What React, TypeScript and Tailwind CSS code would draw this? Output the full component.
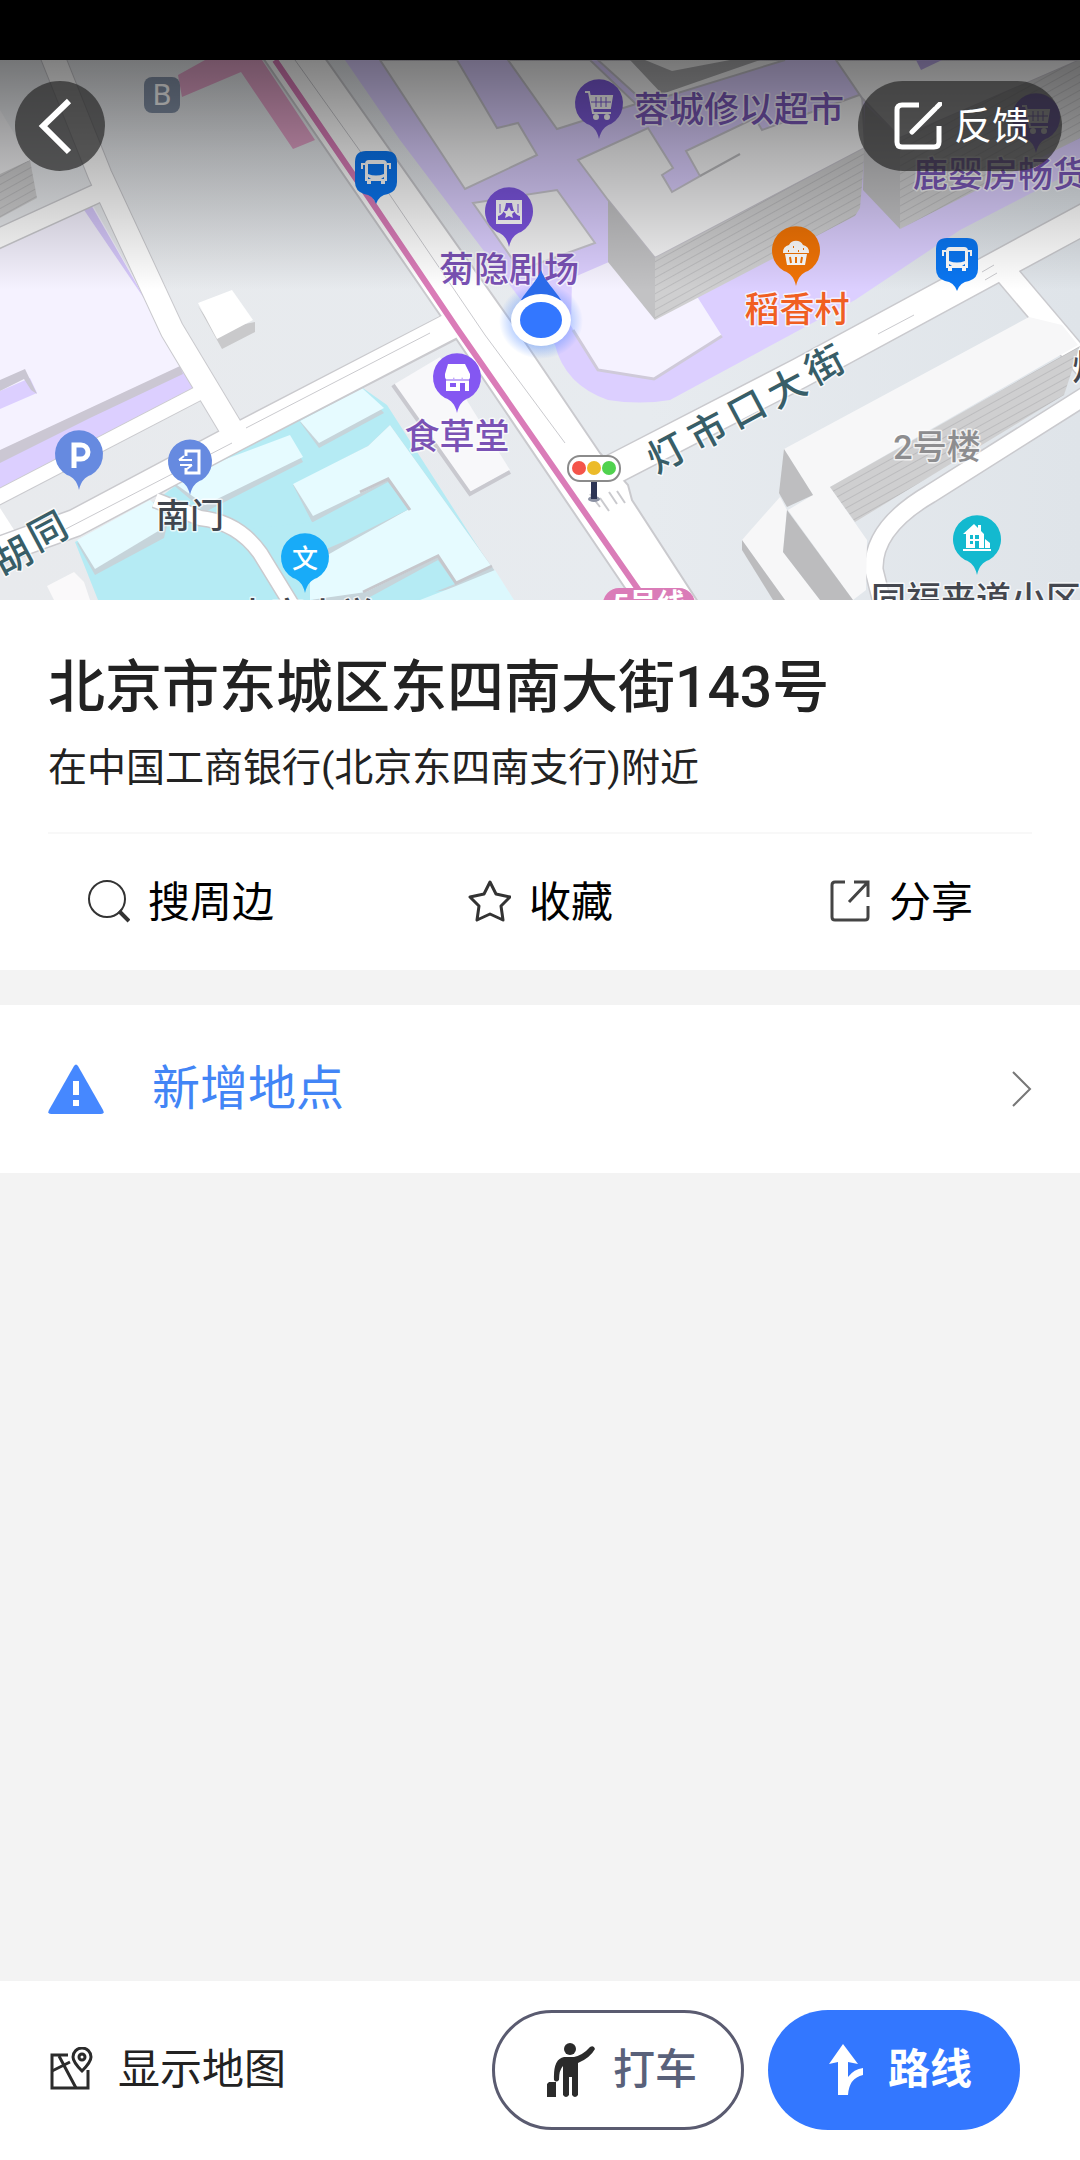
import type { ReactNode } from "react";

type Point = { x: number; y: number };

function Pin({ x, y, color, r = 24, children }: Point & { color: string; r?: number; children?: ReactNode }) {
  return (
    <g transform={`translate(${x} ${y})`}>
      <path
        d={`M0 ${r + 11} C-2 ${r + 2} -6 ${r - 2} -12 ${r - 4} A${r} ${r} 0 1 1 12 ${r - 4} C6 ${r - 2} 2 ${r + 2} 0 ${r + 11}Z`}
        fill={color}
      />
      {children}
    </g>
  );
}

function BusPin({ x, y }: Point) {
  return (
    <g transform={`translate(${x} ${y})`}>
      <path d="M-10 -22H10Q21 -22 21 -11V9Q21 18 12 21Q3 22 0 31Q-3 22 -12 21Q-21 18 -21 9V-11Q-21 -22 -10 -22Z" fill="#0a76f2" />
      <path
        fillRule="evenodd"
        fill="#fff"
        d="M-7 -13H7Q11 -13 11 -9V8H9V11H5V8H-5V11H-9V8H-11V-9Q-11 -13 -7 -13ZM-8 -9V1Q0 4 8 1V-9ZM-8 4V6H-5ZM8 4V6H5Z"
      />
      <path d="M-11 -9H-14V-4M11 -9H14V-4" stroke="#fff" strokeWidth="2" fill="none" />
    </g>
  );
}

function Cart() {
  return (
    <g fill="none" stroke="#fff" strokeWidth="2">
      <path d="M-14 -12H-10L-6 9H12" />
      <path d="M-9 -8H13L11 4H-7" fill="#fff" />
      <path d="M-3 -7V3M2 -7V3M7 -7V3M-8 -2H12" stroke="#7c5ad8" strokeWidth="1" />
      <circle cx="-3" cy="13" r="2" fill="#fff" />
      <circle cx="8" cy="13" r="2" fill="#fff" />
    </g>
  );
}

function Label({ x, y, color, size = 35, anchor = "middle", children }: Point & {
  color: string;
  size?: number;
  anchor?: "start" | "middle";
  children: string;
}) {
  return (
    <text x={x} y={y} fill={color} fontSize={size} fontWeight="500" textAnchor={anchor} stroke="#fff" strokeOpacity="0.7" strokeWidth="3" strokeLinejoin="round" paintOrder="stroke">
      {children}
    </text>
  );
}

const streetNames = [
  { char: "灯", x: 673, y: 465 },
  { char: "市", x: 714, y: 443 },
  { char: "口", x: 753, y: 421 },
  { char: "大", x: 793, y: 400 },
  { char: "街", x: 831, y: 377 },
  { char: "胡", x: 19, y: 568 },
  { char: "同", x: 54, y: 543 },
];

function MapView() {
  return (
    <svg viewBox="0 60 1080 540" preserveAspectRatio="xMidYMid slice" className="block h-[540px] w-full" role="img" aria-label="地图">
      <defs>
        <linearGradient id="shade" x1="0" y1="0" x2="0" y2="1">
          <stop offset="0" stopColor="#000" stopOpacity="0.5" />
          <stop offset="0.4" stopColor="#000" stopOpacity="0.28" />
          <stop offset="1" stopColor="#000" stopOpacity="0" />
        </linearGradient>
        <linearGradient id="ground" x1="0" y1="0" x2="1" y2="0">
          <stop offset="0" stopColor="#e8eaed" />
          <stop offset="0.6" stopColor="#e7ebef" />
          <stop offset="1" stopColor="#dfe4e9" />
        </linearGradient>
        <pattern id="floors" width="8" height="7" patternUnits="userSpaceOnUse" patternTransform="rotate(-29)">
          <path d="M0 0H8V7H0Z" fill="#cfcfd0" />
          <path d="M0 0H8" stroke="#bcbcbe" strokeWidth="2" />
        </pattern>
        <radialGradient id="glow">
          <stop offset="0.6" stopColor="#3377ff" stopOpacity="0.4" />
          <stop offset="1" stopColor="#3377ff" stopOpacity="0" />
        </radialGradient>
      </defs>

      <path d="M0 60H1080V600H0Z" fill="url(#ground)" />

      {/* West block */}
      <path d="M0 243L90 200L163 330L200 384L0 486Z" fill="#f5f2ff" />
      <path d="M82 207L90 203L163 330L198 372L160 322L135 285Z" fill="#d6c8fb" />
      <path d="M0 460L182 368L200 384L0 488Z" fill="#dccfff" />
      <path d="M0 450L180 366L183 374L90 418L0 463Z" fill="#cbc7d3" />
      <path d="M0 391L30 378L37 393L0 409Z" fill="#dccfff" />
      <path d="M0 380L25 369L37 394L31 390L24 379L0 391Z" fill="#c9c6d2" />
      <path d="M0 170L30 160L37 198L0 218Z" fill="url(#floors)" />
      <path d="M0 110L30 160L0 174Z" fill="#f2f2f4" />

      {/* School grounds */}
      <path d="M75 542L150 505L212 458L360 386L387 405L512 600H98Z" fill="#b5ebf4" />
      <g fill="#c6d4da">
        <path d="M77 543L150 503L168 522L164 538L95 575Z" />
        <path d="M170 482L290 436L303 462L205 512Z" />
        <path d="M300 422L362 388L384 413L319 448Z" />
        <path d="M293 485L368 446L390 425L495 571L456 589L370 600H313V524Z" />
      </g>
      <g fill="#e6fbff">
        <path d="M77 540L150 500L168 517L160 530L95 569Z" />
        <path d="M170 480L290 435L303 457L205 505Z" />
        <path d="M300 421L362 388L384 408L319 443Z" />
        <path d="M293 484L368 446L390 425L492 567L456 583L438 557L366 592L310 600V565L345 545L409 509L388 480L313 516Z" />
      </g>
      <path d="M313 522L388 482L409 509L345 541L310 556L275 560L240 530Z" fill="#b5ebf4" />
      <path d="M370 597L438 560L455 584L415 600H370Z" fill="#b5ebf4" />
      <path d="M456 586L495 570L514 600H420Z" fill="#dcf8fd" />
      <path d="M360 492L388 479L410 510M363 592L438 556L456 583L492 566" stroke="#c6c7cc" strokeWidth="3" fill="none" />
      <path d="M47 586L74 572L84 582L90 600H54Z" fill="#faf9fa" />
      <path d="M0 508L16 533L0 541Z" fill="#fff" />

      {/* North-east mall */}
      <path d="M325 60H1080V168L960 230L855 300L720 373L670 400Q640 405 608 400Q565 385 555 345L400 140L345 60Z" fill="#dccfff" />
      <path d="M572 278L609 262L655 300L698 298L722 336L654 379L598 370L571 326Z" fill="#f5f2ff" />
      <path d="M573 330L598 370L654 379L722 336" stroke="#cfcad9" strokeWidth="3" fill="none" />
      <g fill="#f4f4f5" stroke="#c6c4cc" strokeWidth="2">
        <path d="M380 60H457L497 128L518 123L537 155L465 189Z" />
        <path d="M508 60H590L636 104L557 129Z" />
        <path d="M473 203L557 190L595 243L520 270Z" />
        <path d="M598 60L642 100H655L785 60Z" />
        <path d="M578 160L648 128L673 168L662 175L672 192L700 176L686 151L755 118L762 130L862 94L865 148L655 258L608 200Z" />
        <path d="M836 60H1080L900 138L862 98Z" />
      </g>
      <path d="M700 176L740 154" stroke="#b9b9bc" strokeWidth="2" />
      <path d="M630 60L662 94L760 60Z" fill="#a9a9ab" />
      <path d="M645 60H730L672 71Z" fill="#eee" />
      <path d="M608 200L655 258V320L608 262Z" fill="#c2c2c4" />
      <path d="M655 258L865 148L860 208L855 216L655 320Z" fill="url(#floors)" />
      <path d="M865 104L900 138V229L863 190Z" fill="#c2c2c4" />
      <path d="M900 138L1080 60V138L900 229Z" fill="url(#floors)" />
      <path d="M916 60H942L921 70Z" fill="#b9a8e4" />

      {/* Streets */}
      <g fill="none" stroke="#cacace" strokeLinejoin="round">
        <path d="M52 55L100 175L172 330L232 430" strokeWidth="25" />
        <path d="M-5 240L100 192" strokeWidth="21" />
        <path d="M-5 499L205 390" strokeWidth="16" />
        <path d="M-5 552L75 523L235 438L450 327" strokeWidth="29" />
        <path d="M155 500L200 518Q238 522 260 553L295 610" strokeWidth="17" />
        <path d="M610 471L800 373L1090 216" strokeWidth="32" />
        <path d="M1000 266L1090 372" strokeWidth="25" />
        <path d="M1090 393L930 494Q872 528 874 570L884 610" strokeWidth="20" />
      </g>
      <path d="M263 58L440 315L625 588L640 605H700L632 500L628 485L600 453L510 320L325 58Z" fill="#fff" stroke="#cacace" strokeWidth="2" />
      <g fill="none" stroke="#fff" strokeLinejoin="round">
        <path d="M52 55L100 175L172 330L232 430" strokeWidth="23" />
        <path d="M-5 240L100 192" strokeWidth="18" />
        <path d="M-5 499L205 390" strokeWidth="14" />
        <path d="M-5 552L75 523L235 438L460 321" strokeWidth="26" />
        <path d="M155 500L200 518Q238 522 260 553L295 610" strokeWidth="14" />
        <path d="M602 475L800 373L1090 216" strokeWidth="29" />
        <path d="M1000 266L1090 372" strokeWidth="22" />
        <path d="M1090 393L930 494Q872 528 874 570L884 610" strokeWidth="17" />
      </g>
      <g fill="none" stroke="#cacace" strokeWidth="1">
        <path d="M295 60L360 151L485 335L565 443" />
        <path d="M60 532L232 443M246 428L430 333" />
        <path d="M600 507L590 494M609 511L600 498M617 504L609 492M625 503L617 491" strokeWidth="2" />
        <path d="M878 334L914 315M982 272L994 265M985 280L997 273" />
      </g>
      <path d="M178 75L205 60H262L315 140L293 149L241 72L182 97Z" fill="#e2a3c8" />
      <path d="M275 60L365 192L458 330L640 592" stroke="#da7cb8" strokeWidth="6" fill="none" />

      {/* Loose buildings */}
      <path d="M198 306L222 349L255 332V322L215 330Z" fill="#c9c9cb" />
      <path d="M198 303L232 290L253 320L217 339Z" fill="#fff" />
      <path d="M393 385L440 357L510 470L470 492Z" fill="#f8f8fa" />
      <path d="M393 385L470 494L510 472" stroke="#c9c9cf" strokeWidth="4" fill="none" />
      <path d="M784 449L1029 317L1062 325L1078 345L830 487L867 540L866 590L853 600L788 510L813 495Z" fill="#f7f7f8" />
      <path d="M830 487L1080 346L1064 395L855 522Z" fill="url(#floors)" />
      <path d="M784 449L813 495L787 507L779 493Z" fill="#bebec0" />
      <path d="M742 540L780 497L787 510L783 552L820 600H785Z" fill="#f7f7f8" />
      <path d="M787 510L853 600H820L783 552Z" fill="#bcbcbe" />
      <path d="M742 540L785 600H773L742 550Z" fill="#bcbcbe" />

      {/* Labels */}
      <Label x={634} y={122} anchor="start" color="#7a58b8">蓉城修以超市</Label>
      <Label x={913} y={187} anchor="start" color="#7a58b8">鹿婴房畅货</Label>
      <Label x={509} y={282} color="#7a52b5">菊隐剧场</Label>
      <Label x={797} y={322} color="#f05f22">稻香村</Label>
      <Label x={457} y={449} color="#7a52b5">食草堂</Label>
      <Label x={190} y={528} color="#41464e" size={34}>南门</Label>
      <Label x={937} y={459} color="#8d8d8f" size={34}>2号楼</Label>
      <Label x={871} y={612} anchor="start" color="#44474f">同福来道小区</Label>
      <Label x={305} y={628} color="#44474f">史家小学</Label>
      <Label x={1072} y={380} anchor="start" color="#44474f">灯</Label>
      {streetNames.map(({ char, x, y }) => (
        <g key={char} transform={`translate(${x} ${y}) rotate(-28)`}>
          <Label x={0} y={0} size={38} color="#385e68">{char}</Label>
        </g>
      ))}

      {/* Pins */}
      <rect x="144" y="77" width="36" height="36" rx="8" fill="#8492a8" />
      <text x="162" y="105" fill="#fff" fontSize="30" textAnchor="middle">B</text>
      <BusPin x={376} y={173} />
      <BusPin x={957} y={260} />
      <Pin x={599} y={104} color="#7c5ad8"><Cart /></Pin>
      <Pin x={1036} y={118} color="#7c5ad8"><Cart /></Pin>
      <Pin x={509} y={212} color="#7c55e0">
        <path fillRule="evenodd" fill="#fff" d="M-13 -12H13V12H-13ZM-3 -9C-4 -2 -6 3 -11 4V8H11V4C6 3 4 -2 3 -9Z" />
        <path d="M0 -5L2 -1H6L3 2L4 6L0 4L-4 6L-3 2L-6 -1H-2Z" fill="#fff" />
        <path d="M-9 -8V1M9 -8V1" stroke="#7c55e0" strokeWidth="1" />
      </Pin>
      <Pin x={796} y={251} color="#f27405">
        <path d="M-13 2A7 7 0 0 1 -7 -6A8 8 0 0 1 7 -6A7 7 0 0 1 13 2Z" fill="#fff" />
        <path d="M-11 3H11L9 14H-9Z" fill="#fff" />
        <path d="M-6 6L-5 12M0 6V12M6 6L5 12" stroke="#f27405" strokeWidth="2" />
        <path d="M-8 0H-7M-3 -4H-2M2 0H3M7 -2H8" stroke="#f27405" strokeWidth="2" />
      </Pin>
      <Pin x={79} y={455} color="#668ae0">
        <path d="M-5 13V-10H2A7 7 0 0 1 2 4H-5" fill="none" stroke="#fff" strokeWidth="5" />
      </Pin>
      <Pin x={190} y={462} r={22} color="#668ae0">
        <path d="M-4 -6V-11H9V11H-4V6" fill="none" stroke="#fff" strokeWidth="3" />
        <path d="M-11 -2H2M-6 -6L-11 -2M2 3H-10M-3 7L2 3" fill="none" stroke="#fff" strokeWidth="2" />
      </Pin>
      <Pin x={457} y={378} color="#8457f2">
        <path d="M-9 -14H8L13 -4V-2A4 4 0 0 1 5 -1A4 4 0 0 1 -3 -1A4 4 0 0 1 -12 -2V-4Z" fill="#fff" />
        <path fillRule="evenodd" d="M-11 1H12V13H-11ZM-7 5V9H-1V5ZM3 5V13H8V5Z" fill="#fff" />
        <path d="M-11 2H12" stroke="#8457f2" strokeWidth="1" />
      </Pin>
      <Pin x={305} y={558} color="#18abf8">
        <text y="10" fill="#fff" fontSize="26" fontWeight="500" textAnchor="middle">文</text>
      </Pin>
      <Pin x={977} y={540} color="#13b9cf">
        <path fillRule="evenodd" d="M-14 -6L-3 -16L1 -12V-15H4V-9L7 -6V8H-11V-6ZM-7 -5V-1H-4V-5ZM-2 -5V-1H2V-5ZM-7 1V4H-4V1ZM-2 1V8H2V1Z" fill="#fff" />
        <path d="M8 -1L13 3V8H8ZM-14 9H14V11H-14Z" fill="#fff" />
      </Pin>

      {/* Traffic light */}
      <ellipse cx="594" cy="499" rx="6" ry="3" fill="#8b91a3" />
      <path d="M594 480V499" stroke="#2c3454" strokeWidth="6" />
      <rect x="568" y="456" width="52" height="25" rx="12" fill="#fff" stroke="#8b8b8b" strokeWidth="2" />
      <circle cx="579" cy="468" r="7" fill="#f4544a" />
      <circle cx="594" cy="468" r="7" fill="#ecbb2a" />
      <circle cx="609" cy="468" r="7" fill="#50d24e" />

      {/* Subway line badge */}
      <rect x="603" y="588" width="92" height="34" rx="16" fill="#da7cb8" />
      <text x="649" y="614" fill="#fff" fontSize="28" fontWeight="700" textAnchor="middle">5号线</text>

      <path d="M0 60H1080V290H0Z" fill="url(#shade)" />

      {/* Current position */}
      <ellipse cx="541" cy="321" rx="42" ry="38" fill="url(#glow)" />
      <path d="M541 270C545 281 555 290 561 300H521C527 290 537 281 541 270Z" fill="#2b6bea" />
      <ellipse cx="541" cy="320" rx="30" ry="26" fill="#fff" />
      <ellipse cx="541" cy="320" rx="21" ry="18" fill="#3377ff" />
    </svg>
  );
}

function SearchIcon() {
  return (
    <svg viewBox="0 0 44 44" className="size-11" fill="none" stroke="#333" aria-hidden="true">
      <circle cx="21" cy="19" r="18" strokeWidth="2" />
      <path d="M33 31L43 41" strokeWidth="4" />
    </svg>
  );
}

function StarIcon() {
  return (
    <svg viewBox="0 0 44 44" className="size-11" fill="none" stroke="#333" strokeWidth="3" strokeLinejoin="round" aria-hidden="true">
      <path d="M23 2L29 14L43 17L34 26L36 40L23 34L10 40L12 26L3 17L17 14Z" />
    </svg>
  );
}

function ShareIcon() {
  return (
    <svg viewBox="0 0 44 44" className="size-11" fill="none" stroke="#444" strokeWidth="3" aria-hidden="true">
      <path d="M18 2H8Q5 2 5 5V37Q5 40 8 40H38Q41 40 41 37V26" />
      <path d="M27 2H41V17M41 2L22 22" />
    </svg>
  );
}

const actions = [
  { label: "搜周边", icon: <SearchIcon /> },
  { label: "收藏", icon: <StarIcon /> },
  { label: "分享", icon: <ShareIcon /> },
];

export default function App() {
  return (
    <div className="flex min-h-screen flex-col bg-[#f3f3f3] font-['Roboto','Noto_Sans_CJK_SC',sans-serif] text-[#222]">
      <div className="h-[60px] bg-black" />

      <header className="relative">
        <MapView />
        <div className="absolute inset-x-0 top-[21px] flex items-center justify-between pr-[18px] pl-[15px]">
          <button type="button" aria-label="返回" className="flex size-[90px] items-center justify-center rounded-full bg-[#282828]/70">
            <svg viewBox="0 0 90 90" className="size-full" fill="none" stroke="#fff" strokeWidth="6" aria-hidden="true">
              <path d="M54 20L28 45L54 71" />
            </svg>
          </button>
          <button type="button" className="flex h-[90px] items-center gap-3 rounded-full bg-[#282828]/70 pr-8 pl-9 text-[38px] text-white">
            <svg viewBox="0 0 48 48" className="size-12" fill="none" stroke="#fff" strokeWidth="5" aria-hidden="true">
              <path d="M25 3H8Q3 3 3 8V40Q3 45 8 45H40Q45 45 45 40V24" />
              <path d="M18 30L41 7M43 5L46 2" strokeLinecap="round" />
            </svg>
            反馈
          </button>
        </div>
      </header>

      <main className="flex-1">
        <section className="bg-white px-12">
          <div className="border-b-2 border-[#f8f8f8] pt-12 pb-[34px]">
            <h1 className="text-[57px] leading-[80px] font-medium">北京市东城区东四南大街143号</h1>
            <p className="mt-[10px] text-[39px] leading-[60px]">在中国工商银行(北京东四南支行)附近</p>
          </div>
          <div className="-mx-12 grid h-[136px] grid-cols-3">
            {actions.map(({ label, icon }) => (
              <button key={label} type="button" className="flex items-center justify-center gap-[18px] text-[42px] text-black">
                {icon}
                {label}
              </button>
            ))}
          </div>
        </section>

        <button type="button" className="mt-[35px] flex h-[168px] w-full items-center bg-white px-12 text-[48px] text-[#4285f6]">
          <svg viewBox="0 0 56 50" className="h-[50px] w-14" aria-hidden="true">
            <path d="M26 2Q28 -1 30 2L55 46Q57 50 53 50H3Q-1 50 1 46Z" fill="#4688ff" />
            <path d="M28 17V31M28 36V42" stroke="#fff" strokeWidth="6" />
          </svg>
          <span className="ml-12">新增地点</span>
          <svg viewBox="0 0 22 38" className="ml-auto h-[38px] w-[22px]" fill="none" stroke="#777" strokeWidth="2" aria-hidden="true">
            <path d="M3 2L20 19L3 36" />
          </svg>
        </button>
      </main>

      <footer className="flex h-[179px] items-center gap-6 bg-white pr-[60px] pb-0.5 pl-12 text-[42px]">
        <button type="button" className="mr-auto flex items-center gap-6">
          <svg viewBox="0 0 46 46" className="size-[46px]" fill="none" stroke="#2b2b2b" strokeWidth="3" aria-hidden="true">
            <path d="M20 8H4V41H40V23" />
            <path d="M4 24L22 15M11 9L28 41" />
            <path d="M34 24Q25 15 25 10A9 9 0 0 1 43 10Q43 15 34 24Z" />
            <circle cx="34" cy="10" r="3" />
          </svg>
          显示地图
        </button>
        <button type="button" className="flex h-[120px] w-[252px] items-center justify-center gap-[18px] rounded-full border-3 border-[#5a5b70] pl-2 font-medium text-[#59617a]">
          <svg viewBox="0 0 48 56" className="h-14 w-12" fill="#2b2b2b" aria-hidden="true">
            <circle cx="23" cy="7" r="6" />
            <path d="M17 15H27Q36 13 43 5Q47 3 48 7Q43 16 31 21V53Q28 57 25 53V35H22V53Q19 57 16 53V24Q12 28 12 38Q9 41 7 38Q6 17 17 15Z" />
            <path d="M2 40H9V55H0V42Z" />
          </svg>
          打车
        </button>
        <button type="button" className="flex h-[120px] w-[252px] items-center justify-center gap-6 rounded-full bg-[#3377ff] pl-3 font-bold text-white">
          <svg viewBox="0 0 36 52" className="h-[52px] w-9" fill="#fff" aria-hidden="true">
            <path d="M15 0L30 20L20 18V33Q26 25 35 24V31Q21 34 20 51H10V18L1 20Z" />
          </svg>
          路线
        </button>
      </footer>
    </div>
  );
}
